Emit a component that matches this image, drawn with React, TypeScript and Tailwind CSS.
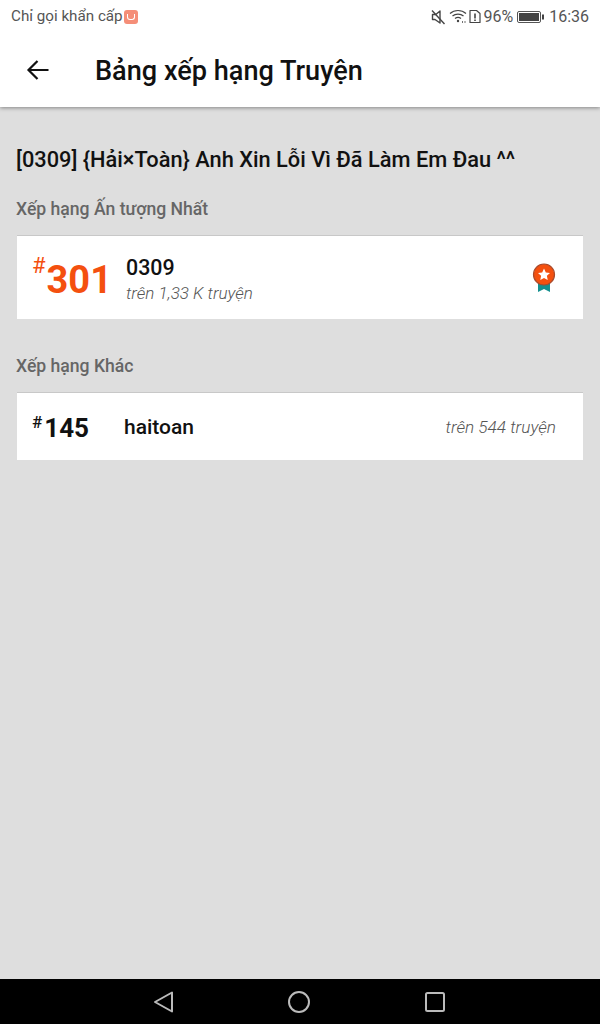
import React from 'react';

const StatusIcons = () => (
  <>
    {/* muted speaker */}
    <svg width="15" height="16" viewBox="0 0 15 16" fill="none" stroke="#444" strokeWidth="1.400" className="mr-[3px]">
      <path d="M1.500 5.500v5h2.500l5 3.500V2L4.800 5.500z" strokeLinejoin="round" />
      <path d="M1 1.500l12.500 13.500" />
    </svg>
    {/* wifi */}
    <svg width="18" height="15" viewBox="0 0 18 15" fill="none" stroke="#444" strokeWidth="1.200" className="mr-[2px]">
      <path d="M1 4.500c4.500-4 11.500-4 16 0" />
      <path d="M3.500 7c3-2.600 8-2.600 11 0" />
      <path d="M6 9.500c1.700-1.400 4.300-1.400 6 0" />
      <circle cx="9" cy="12" r="1.200" fill="#444" stroke="none" />
      <path d="M13 13h1M15.500 13h1" strokeWidth="1.400" />
    </svg>
    {/* document alert */}
    <svg width="12" height="15" viewBox="0 0 12 15" fill="none" stroke="#444" strokeWidth="1.200">
      <path d="M1 1.500h6.500l3.500 3v9H1z" strokeLinejoin="round" />
      <path d="M6 4.500v5M6 10.500v1.500" strokeWidth="1.600" />
    </svg>
  </>
);

const Battery = () => (
  <svg width="27" height="12" viewBox="0 0 27 12" className="ml-[4px] mr-[5px]">
    <rect x="0.500" y="0.500" width="23" height="11" rx="1.500" fill="none" stroke="#555" />
    <rect x="2" y="2" width="20" height="8" fill="#444" />
    <rect x="25" y="3.500" width="2" height="5" fill="#444" />
  </svg>
);

const Medal = () => (
  <svg width="24" height="30" viewBox="0 0 24 30">
    <path d="M6 17h12v12l-6-3-6 3z" fill="#14908f" />
    <circle cx="12" cy="11.500" r="10.500" fill="#f4500f" stroke="#a84a2c" strokeWidth="1.200" />
    <path d="M12 5.500l1.800 3.900 4.200.5-3.100 2.900.8 4.200-3.700-2.100-3.700 2.100.8-4.200L6 9.900l4.200-.5z" fill="#fff" />
  </svg>
);

export default function App() {
  return (
    <div className="w-[600px] h-[1024px] flex flex-col bg-[#dedede] overflow-hidden font-['Roboto',sans-serif]">
      {/* Status bar */}
      <div className="h-[33px] bg-white flex items-center pl-[11px] text-[#555] text-[15.200px] relative z-10">
        <span>Chỉ gọi khẩn cấp</span>
        <span className="w-[14px] h-[14px] rounded-[3px] bg-[#f58e78] ml-[1px] flex items-center justify-center">
          <span className="w-[8px] h-[6px] border border-white border-t-0 rounded-b-[3px]"></span>
        </span>
        <div className="ml-auto flex items-center pr-[11px] text-[16px]">
          <StatusIcons />
          <span className="ml-[2px]">96%</span>
          <Battery />
          <span>16:36</span>
        </div>
      </div>

      {/* App bar */}
      <div className="h-[74px] bg-white flex items-center shadow-[0_1px_4px_rgba(0,0,0,0.4)] relative">
        <svg width="24" height="24" viewBox="0 0 24 24" fill="none" stroke="#111" strokeWidth="2.200" className="ml-[26px]">
          <path d="M22.500 12H2.500M11.500 3l-9 9 9 9" />
        </svg>
        <h1 className="ml-[45px] pt-[3px] text-[27.100px] font-medium text-[#111]">Bảng xếp hạng Truyện</h1>
      </div>

      {/* Content */}
      <div className="flex-1 px-[16px] pt-[40px]">
        <h2 className="text-[21.800px] leading-[26px] font-medium text-[#111] whitespace-nowrap">
          [0309] {'{'}Hải×Toàn{'}'} Anh Xin Lỗi Vì Đã Làm Em Đau ^^
        </h2>
        <h3 className="mt-[24px] text-[17.600px] leading-[24px] font-medium text-[#666]">Xếp hạng Ấn tượng Nhất</h3>

        <div className="mt-[14px] mx-[1px] h-[84px] bg-white border-t border-[#c8c8c8] flex items-center pl-[15px] pr-[27px]">
          <div className="flex w-[94px] text-[#f4500f]">
            <span className="text-[22px] leading-[24px] font-normal mt-[1px] mr-[1px]">#</span>
            <span className="text-[38px] leading-[46px] font-bold mt-[4px]">301</span>
          </div>
          <div className="flex-1 pt-[4px]">
            <div className="text-[21.400px] leading-[26px] font-medium text-[#111]">0309</div>
            <div className="text-[17px] leading-[24px] font-light italic text-[#555]">trên 1,33 K truyện</div>
          </div>
          <Medal />
        </div>

        <h3 className="mt-[35px] text-[17.600px] leading-[24px] font-medium text-[#666]">Xếp hạng Khác</h3>

        <div className="mt-[14px] mx-[1px] h-[68px] pt-[2px] bg-white border-t border-[#c8c8c8] flex items-center pl-[15px] pr-[27px]">
          <div className="flex w-[92px] text-[#111]">
            <span className="text-[17px] leading-[20px] font-medium mr-[2px]">#</span>
            <span className="text-[26px] leading-[32px] font-bold">145</span>
          </div>
          <div className="flex-1 text-[21px] font-medium text-[#111]">haitoan</div>
          <div className="text-[17.200px] font-light italic text-[#555]">trên 544 truyện</div>
        </div>
      </div>

      {/* Nav bar */}
      <div className="h-[45px] bg-black flex items-center">
        <svg width="22" height="24" viewBox="0 0 22 24" fill="none" stroke="#bbb" strokeWidth="2" strokeLinejoin="round" className="ml-[153px]">
          <path d="M19 2.500v19L2 12z" />
        </svg>
        <svg width="24" height="24" viewBox="0 0 24 24" fill="none" stroke="#bbb" strokeWidth="2" className="ml-[112px]">
          <circle cx="12" cy="12" r="10" />
        </svg>
        <svg width="20" height="20" viewBox="0 0 20 20" fill="none" stroke="#bbb" strokeWidth="2" className="ml-[114px]">
          <rect x="1" y="1" width="18" height="18" rx="1.500" />
        </svg>
      </div>
    </div>
  );
}
